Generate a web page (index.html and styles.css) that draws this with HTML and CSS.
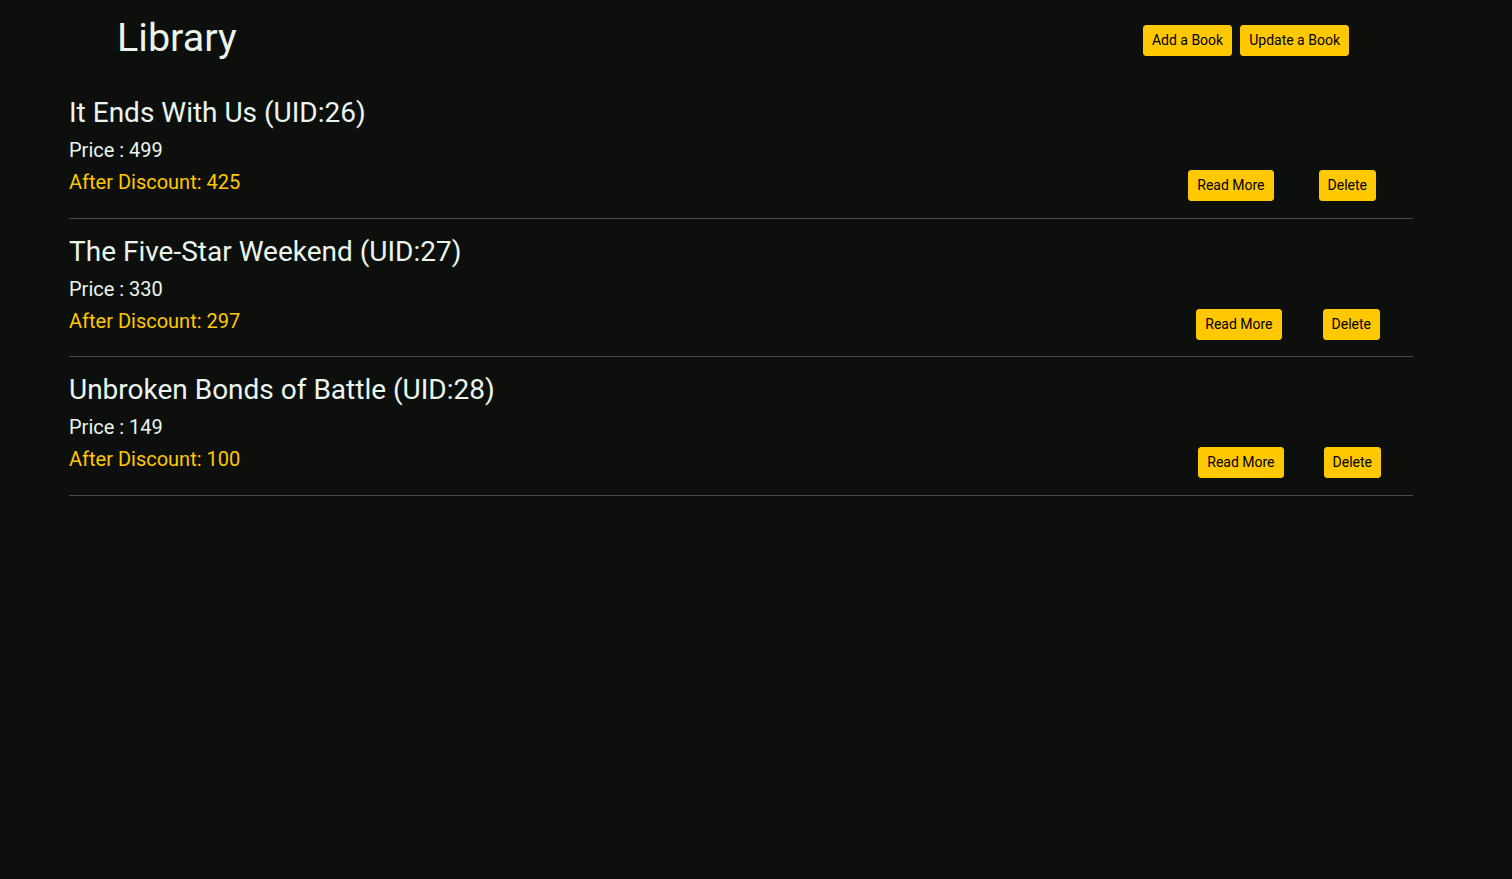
FILE: index.html
```html
<!DOCTYPE html>
<html lang="en">
<head>
<meta charset="utf-8">
<title>Library</title>
<link rel="stylesheet" href="styles.css">
</head>
<body>
<div class="page">
  <header class="header">
    <h1 class="logo">Library</h1>
    <div class="header-actions">
      <button class="btn">Add a Book</button>
      <button class="btn">Update a Book</button>
    </div>
  </header>
  <main class="list">
    <section class="book book-1">
      <div class="info">
        <h2 class="title">It Ends With Us (UID:26)</h2>
        <p class="price">Price : 499</p>
        <p class="discount">After Discount: 425</p>
      </div>
      <div class="actions">
        <button class="btn">Read More</button>
        <button class="btn">Delete</button>
      </div>
    </section>
    <section class="book book-2">
      <div class="info">
        <h2 class="title">The Five-Star Weekend (UID:27)</h2>
        <p class="price">Price : 330</p>
        <p class="discount">After Discount: 297</p>
      </div>
      <div class="actions">
        <button class="btn">Read More</button>
        <button class="btn">Delete</button>
      </div>
    </section>
    <section class="book book-3">
      <div class="info">
        <h2 class="title">Unbroken Bonds of Battle (UID:28)</h2>
        <p class="price">Price : 149</p>
        <p class="discount">After Discount: 100</p>
      </div>
      <div class="actions">
        <button class="btn">Read More</button>
        <button class="btn">Delete</button>
      </div>
    </section>
  </main>
</div>
</body>
</html>
```

FILE: styles.css
```css
html, body {
  margin: 0;
  padding: 0;
  background: #0d0f0c;
  height: 100%;
}
body {
  font-family: Roboto, "Liberation Sans", Arial, sans-serif;
  color: #eaf5ee;
}
.page {
  width: 1344px;
  padding-left: 69px;
}
.header {
  display: flex;
  justify-content: space-between;
  align-items: flex-start;
  padding-top: 14px;
  margin-bottom: 18px;
}
.logo {
  margin: 0 0 0 48px;
  font-size: 39.5px;
  line-height: 48px;
  font-weight: 400;
}
.header-actions {
  display: flex;
  gap: 8px;
  margin-top: 11px;
  margin-right: 64px;
}
.btn {
  font-family: Roboto, "Liberation Sans", Arial, sans-serif;
  font-size: 14px;
  line-height: 21px;
  padding: 4px 8px;
  border: 1px solid #ffc800;
  border-radius: 3px;
  background: #ffc800;
  color: #000;
  font-weight: 400;
  cursor: pointer;
}
.book {
  display: flex;
  justify-content: space-between;
  align-items: flex-end;
  padding: 16px 0 19.5px;
  border-bottom: 1px solid #4a4b48;
}
.title {
  margin: 0 0 4px;
  font-size: 28px;
  line-height: 34px;
  font-weight: 400;
}
.price, .discount {
  margin: 0;
  font-size: 20px;
  line-height: 32px;
}
.discount {
  color: #ffc800;
}
.actions {
  display: flex;
  margin-bottom: -3px;
}
.book-1 .actions { gap: 45px; margin-right: 37px; }
.book-2 .actions { gap: 41px; margin-right: 33px; }
.book-3 .actions { gap: 40px; margin-right: 32px; }
```
